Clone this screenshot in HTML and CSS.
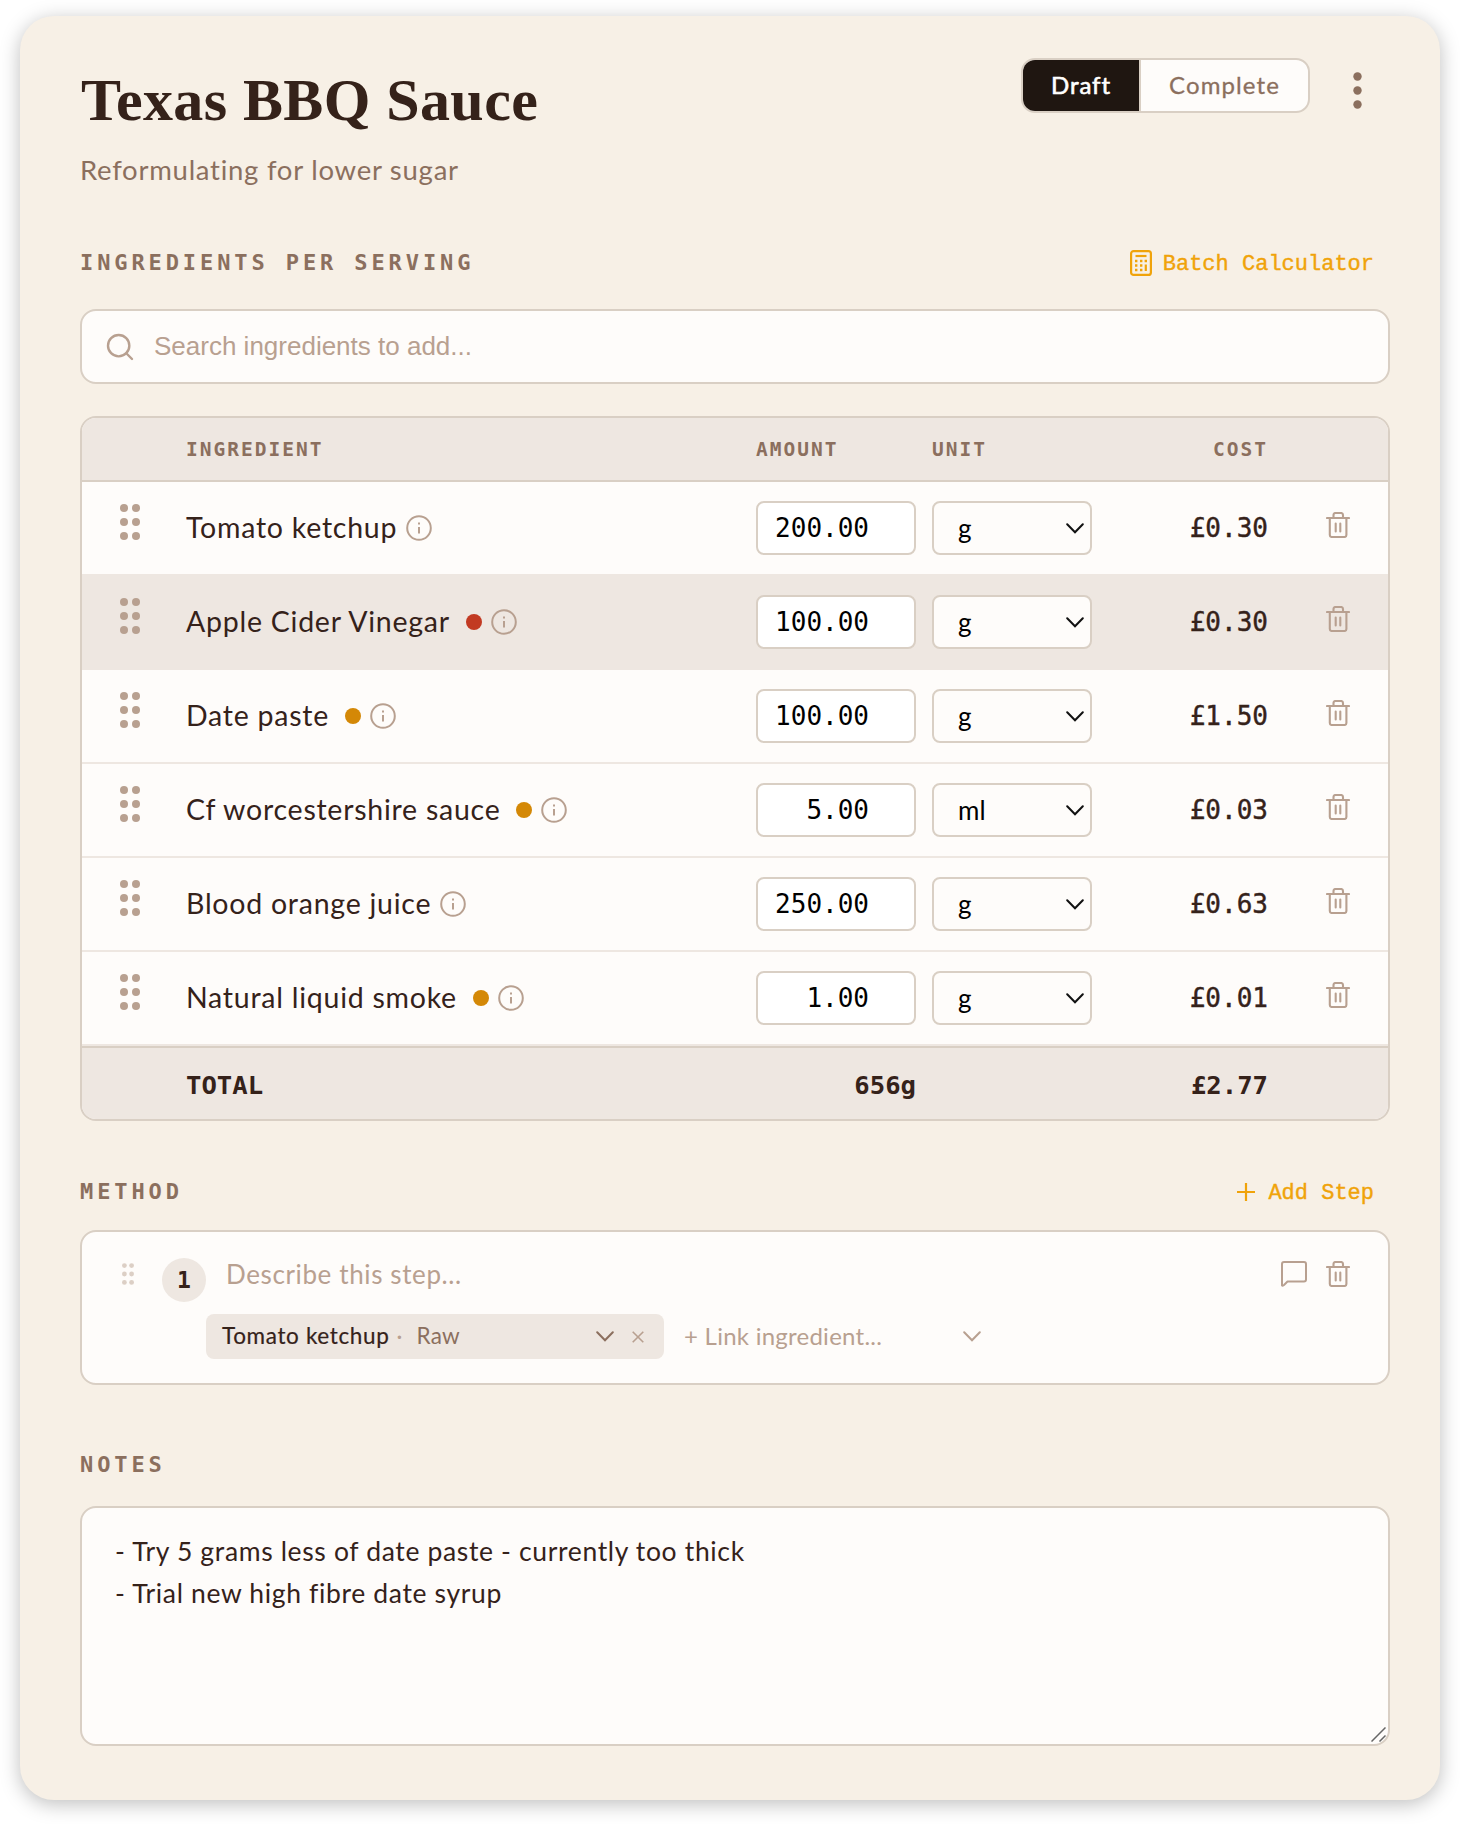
FILE: index.html
```html
<!DOCTYPE html>
<html lang="en">
<head>
    <meta charset="UTF-8">
    <meta name="viewport" content="width=device-width, initial-scale=1.0">
    <title>Texas BBQ Sauce</title>
    <link rel="stylesheet" href="styles.css">
</head>
<body>
    <!-- shared icons -->
    <svg class="sprite" aria-hidden="true">
        <symbol id="i-grip" viewBox="0 0 20 36">
            <circle cx="4" cy="4" r="4"/><circle cx="16" cy="4" r="4"/>
            <circle cx="4" cy="18" r="4"/><circle cx="16" cy="18" r="4"/>
            <circle cx="4" cy="32" r="4"/><circle cx="16" cy="32" r="4"/>
        </symbol>
        <symbol id="i-info" viewBox="0 0 26 26">
            <circle cx="13" cy="13" r="11.8" fill="none" stroke="currentColor" stroke-width="2"/>
            <path d="M13 12v6.5M13 7.6v2" fill="none" stroke="currentColor" stroke-width="2"/>
        </symbol>
        <symbol id="i-trash" viewBox="0 0 24 26">
            <path d="M1 6h22M3.8 6v17a2 2 0 0 0 2 2h12.6a2 2 0 0 0 2-2V6M7.5 6V3a2 2 0 0 1 2-2H15a2 2 0 0 1 2 2v3M9.700 11.500v8M14.300 11.500v8" fill="none" stroke="currentColor" stroke-width="2.1" stroke-linecap="round"/>
        </symbol>
        <symbol id="i-chevron" viewBox="0 0 18 11">
            <path d="M1.2 1.2 9 9.2l7.800-8" fill="none" stroke="currentColor" stroke-width="2" stroke-linecap="round"/>
        </symbol>
    </svg>

    <main class="card">
        <header class="card-header">
            <div>
                <h1>Texas BBQ Sauce</h1>
                <p class="subtitle">Reformulating for lower sugar</p>
            </div>
            <div class="header-actions">
                <div class="toggle">
                    <button class="toggle-btn active">Draft</button>
                    <button class="toggle-btn">Complete</button>
                </div>
                <button class="more-btn" aria-label="More">
                    <svg width="9" height="37" viewBox="0 0 9 37" fill="currentColor">
                        <circle cx="4.5" cy="4.5" r="4.2"/><circle cx="4.5" cy="18.5" r="4.2"/><circle cx="4.5" cy="32.5" r="4.2"/>
                    </svg>
                </button>
            </div>
        </header>

        <section class="ingredients">
            <div class="section-head">
                <h2>INGREDIENTS PER SERVING</h2>
                <button class="link-btn">
                    <svg width="22" height="26" viewBox="0 0 22 26" fill="none" stroke="currentColor" stroke-width="2.2">
                        <rect x="1.1" y="1.1" width="19.8" height="23.8" rx="2.5"/>
                        <path d="M5.500 6h11"/>
                        <path d="M5 11h2.400M10 11h2.400M14.600 11H17M5 15.500h2.400M10 15.500h2.400M5 20h2.400M10 20h2.400" stroke-width="2.4"/>
                        <path d="M15.800 14.500v6.500"/>
                    </svg>
                    <span>Batch Calculator</span>
                </button>
            </div>

            <label class="search">
                <svg width="32" height="32" viewBox="0 0 24 24" fill="none" stroke="currentColor" stroke-width="1.8" stroke-linecap="round">
                    <circle cx="11" cy="11" r="8"/><path d="m21 21-4.3-4.3"/>
                </svg>
                <input type="text" placeholder="Search ingredients to add...">
            </label>

            <div class="table">
                <div class="row table-head">
                    <span></span><span>INGREDIENT</span><span>AMOUNT</span><span>UNIT</span><span class="cost">COST</span><span></span>
                </div>
                <div class="row item">
                    <svg class="grip"><use href="#i-grip"/></svg>
                    <div class="name"><span>Tomato ketchup</span><svg class="info"><use href="#i-info"/></svg></div>
                    <input class="amount" type="text" value="200.00">
                    <div class="unit"><select><option>g</option></select><svg class="chevron"><use href="#i-chevron"/></svg></div>
                    <span class="cost">£0.30</span>
                    <svg class="trash"><use href="#i-trash"/></svg>
                </div>
                <div class="row item highlighted">
                    <svg class="grip"><use href="#i-grip"/></svg>
                    <div class="name"><span>Apple Cider Vinegar</span><i class="dot red"></i><svg class="info"><use href="#i-info"/></svg></div>
                    <input class="amount" type="text" value="100.00">
                    <div class="unit"><select><option>g</option></select><svg class="chevron"><use href="#i-chevron"/></svg></div>
                    <span class="cost">£0.30</span>
                    <svg class="trash"><use href="#i-trash"/></svg>
                </div>
                <div class="row item">
                    <svg class="grip"><use href="#i-grip"/></svg>
                    <div class="name"><span>Date paste</span><i class="dot"></i><svg class="info"><use href="#i-info"/></svg></div>
                    <input class="amount" type="text" value="100.00">
                    <div class="unit"><select><option>g</option></select><svg class="chevron"><use href="#i-chevron"/></svg></div>
                    <span class="cost">£1.50</span>
                    <svg class="trash"><use href="#i-trash"/></svg>
                </div>
                <div class="row item">
                    <svg class="grip"><use href="#i-grip"/></svg>
                    <div class="name"><span>Cf worcestershire sauce</span><i class="dot"></i><svg class="info"><use href="#i-info"/></svg></div>
                    <input class="amount" type="text" value="5.00">
                    <div class="unit"><select><option>ml</option></select><svg class="chevron"><use href="#i-chevron"/></svg></div>
                    <span class="cost">£0.03</span>
                    <svg class="trash"><use href="#i-trash"/></svg>
                </div>
                <div class="row item">
                    <svg class="grip"><use href="#i-grip"/></svg>
                    <div class="name"><span>Blood orange juice</span><svg class="info"><use href="#i-info"/></svg></div>
                    <input class="amount" type="text" value="250.00">
                    <div class="unit"><select><option>g</option></select><svg class="chevron"><use href="#i-chevron"/></svg></div>
                    <span class="cost">£0.63</span>
                    <svg class="trash"><use href="#i-trash"/></svg>
                </div>
                <div class="row item">
                    <svg class="grip"><use href="#i-grip"/></svg>
                    <div class="name"><span>Natural liquid smoke</span><i class="dot"></i><svg class="info"><use href="#i-info"/></svg></div>
                    <input class="amount" type="text" value="1.00">
                    <div class="unit"><select><option>g</option></select><svg class="chevron"><use href="#i-chevron"/></svg></div>
                    <span class="cost">£0.01</span>
                    <svg class="trash"><use href="#i-trash"/></svg>
                </div>
                <div class="row table-total">
                    <span></span><span>TOTAL</span><span class="total-amount">656g</span><span></span><span class="cost">£2.77</span><span></span>
                </div>
            </div>
        </section>

        <section class="method">
            <div class="section-head">
                <h2>METHOD</h2>
                <button class="link-btn add-step">
                    <svg width="18" height="18" viewBox="0 0 18 18" fill="none" stroke="currentColor" stroke-width="2.2"><path d="M9 0v18M0 9h18"/></svg>
                    <span>Add Step</span>
                </button>
            </div>
            <div class="step">
                <div class="step-main">
                    <svg class="grip-small"><use href="#i-grip"/></svg>
                    <span class="step-number">1</span>
                    <span class="step-text">Describe this step...</span>
                    <div class="step-actions">
                        <svg width="26" height="26" viewBox="0 0 26 26" fill="none" stroke="currentColor" stroke-width="2" stroke-linejoin="round"><path d="M1 24.500V3a2 2 0 0 1 2-2h20a2 2 0 0 1 2 2v15.500a2 2 0 0 1-2 2H6.500L3 24Q1.500 25.200 1 24.500Z"/></svg>
                        <svg class="trash"><use href="#i-trash"/></svg>
                    </div>
                </div>
                <div class="step-links">
                    <div class="chip">
                        <span class="chip-name">Tomato ketchup</span>
                        <span class="chip-sep">·</span>
                        <span class="chip-state">Raw</span>
                        <svg class="chevron"><use href="#i-chevron"/></svg>
                        <svg class="remove" viewBox="0 0 12 12" fill="none" stroke="currentColor" stroke-width="1.6"><path d="m.7.7 10.600 10.600M11.300.7.7 11.300"/></svg>
                    </div>
                    <div class="link-select">
                        <span>+ Link ingredient...</span>
                        <svg class="chevron"><use href="#i-chevron"/></svg>
                    </div>
                </div>
            </div>
        </section>

        <section class="notes">
            <h2>NOTES</h2>
            <div class="notes-box">
                <textarea>- Try 5 grams less of date paste - currently too thick
- Trial new high fibre date syrup</textarea>
                <svg class="resizer" viewBox="0 0 15 15" fill="none" stroke="#666" stroke-width="1.5"><path d="M.5 14.500 14.500.5M8.500 14.500l6-6"/></svg>
            </div>
        </section>
    </main>
</body>
</html>
```
FILE: styles.css
```css
:root {
    --bg: #f7f0e6;
    --surface: #fefcfa;
    --shade: #eee7e1;
    --border: #d9cfc4;
    --text: #35221a;
    --muted: #8b6f5e;
    --light: #b8a090;
    --amber: #f0a30a;
    --sans: Lato, 'Open Sans', sans-serif;
    --mono: 'DejaVu Sans Mono', monospace;
}

* {
    box-sizing: border-box;
}

body {
    margin: 0;
    padding: 16px 20px 24px;
    background: #fff;
    color: var(--text);
    font-family: var(--sans);
}

h1, h2, p {
    margin: 0;
}

button {
    padding: 0;
    border: none;
    background: none;
    font: inherit;
    color: inherit;
}

svg {
    display: block;
    flex: none;
}

.sprite {
    display: none;
}

.card {
    height: 1784px;
    padding: 42px 50px 0 60px;
    background: var(--bg);
    border-radius: 34px;
    box-shadow: 0 4px 20px rgba(0, 0, 0, 0.26);
}

/* header */
.card-header {
    display: flex;
    justify-content: space-between;
    height: 180px;
}

h1 {
    padding: 8px 0 0 1px;
    font: bold 60px/68px 'Liberation Serif', serif;
    letter-spacing: 0.4px;
}

.subtitle {
    margin-top: 19px;
    font-size: 27.5px;
    line-height: 34px;
    letter-spacing: 0.74px;
    color: var(--muted);
}

.header-actions {
    display: flex;
    align-items: flex-start;
    margin-right: 28px;
}

.toggle {
    display: flex;
    width: 289px;
    height: 55px;
    border: 2px solid var(--border);
    border-radius: 14px;
    background: var(--surface);
    overflow: hidden;
}

.toggle-btn {
    flex: 1;
    padding-bottom: 3px;
    font-size: 24px;
    letter-spacing: 1.1px;
    color: var(--muted);
    -webkit-text-stroke: 0.3px;
}

.toggle-btn.active {
    flex: 0 0 118px;
    background: #1f1611;
    color: #fff;
    border-right: 2px solid var(--border);
    letter-spacing: 0.9px;
    -webkit-text-stroke: 0.6px;
}

.more-btn {
    margin: 14px 0 0 43px;
    color: var(--muted);
}

/* section titles */
.section-head {
    display: flex;
    align-items: center;
    justify-content: space-between;
    height: 50px;
    padding-right: 16px;
}

h2 {
    font: bold 22px/50px var(--mono);
    letter-spacing: 3.9px;
    color: var(--muted);
}

.link-btn {
    display: flex;
    align-items: center;
    gap: 11px;
    font: 22px/30px 'Liberation Mono', monospace;
    color: var(--amber);
    -webkit-text-stroke: 0.4px;
}

.link-btn span {
    padding-top: 3px;
}

.add-step {
    gap: 13px;
}

/* search */
.search {
    display: flex;
    align-items: center;
    gap: 18px;
    height: 75px;
    margin-top: 21px;
    padding: 0 22px;
    border: 2px solid var(--border);
    border-radius: 16px;
    background: var(--surface);
    color: var(--light);
}

.search input {
    flex: 1;
    padding: 0;
    border: none;
    background: none;
    font: 26px 'Liberation Sans', sans-serif;
}

.search input::placeholder {
    color: var(--light);
}

/* ingredients table */
.table {
    margin-top: 32px;
    border: 2px solid var(--border);
    border-radius: 16px;
    background: var(--surface);
    overflow: hidden;
}

.row {
    display: grid;
    grid-template-columns: 50px 554px 160px 160px 160px 24px;
    column-gap: 16px;
    align-items: center;
    padding-left: 38px;
}

.table-head {
    height: 64px;
    background: var(--shade);
    border-bottom: 2px solid var(--border);
    font: bold 19.5px var(--mono);
    letter-spacing: 2px;
    color: var(--muted);
}

.item {
    height: 94px;
    border-bottom: 2px solid var(--shade);
}

.highlighted {
    background: var(--shade);
}

.grip {
    width: 20px;
    height: 36px;
    margin-bottom: 12px;
    fill: var(--light);
}

.name {
    display: flex;
    align-items: center;
    font-size: 28.5px;
    letter-spacing: 0.75px;
}

.name span {
    padding-bottom: 2px;
}

.dot {
    width: 16px;
    height: 16px;
    margin-left: 16px;
    border-radius: 50%;
    background: #d48806;
}

.dot.red {
    background: #c23a22;
}

.info {
    width: 26px;
    height: 26px;
    margin-left: 9px;
    color: var(--light);
}

.amount {
    width: 160px;
    height: 54px;
    padding: 0 45px 0 0;
    border: 2px solid var(--border);
    border-radius: 8px;
    background: #fff;
    font: 26px var(--mono);
    text-align: right;
    color: #000;
}

.unit {
    display: flex;
    align-items: center;
    height: 54px;
    border: 2px solid var(--border);
    border-radius: 8px;
    background: var(--surface);
    padding: 0 6px 0 24px;
    color: #111;
}

.unit select {
    flex: 1;
    appearance: none;
    padding: 0;
    border: none;
    background: none;
    font: 26px var(--sans);
    color: #000;
}

.chevron {
    width: 18px;
    height: 11px;
}

.cost {
    text-align: right;
}

.item .cost {
    font: 26px var(--mono);
    -webkit-text-stroke: 0.4px;
}

.trash {
    width: 24px;
    height: 26px;
    color: var(--light);
}

.item .trash {
    margin: 0 0 6px 42px;
}

.table-total {
    height: 73px;
    padding-top: 2px;
    border-top: 2px solid var(--border);
    background: var(--shade);
    font: bold 25.6px var(--mono);
}

.total-amount {
    text-align: right;
}

/* method */
.method {
    margin-top: 46px;
}

.step {
    height: 155px;
    margin-top: 13px;
    border: 2px solid var(--border);
    border-radius: 16px;
    background: var(--surface);
}

.step-main {
    display: flex;
    padding: 26px 38px 0 40px;
}

.grip-small {
    width: 12px;
    height: 22px;
    margin-top: 5px;
    fill: #dccfc5;
}

.step-number {
    width: 44px;
    height: 44px;
    margin-left: 28px;
    border-radius: 50%;
    background: var(--shade);
    font: bold 23px/45px var(--mono);
    text-align: center;
}

.step-text {
    margin-left: 20px;
    font-size: 26px;
    line-height: 32px;
    letter-spacing: 0.62px;
    color: var(--light);
}

.step-actions {
    display: flex;
    gap: 19px;
    margin: 3px 0 0 auto;
    color: var(--light);
}

.step-links {
    display: flex;
    align-items: center;
    margin: 12px 0 0 124px;
}

.chip {
    display: flex;
    align-items: center;
    width: 458px;
    height: 45px;
    padding: 0 20px 0 16px;
    border-radius: 8px;
    background: var(--shade);
    font-size: 22.5px;
    letter-spacing: 0.2px;
    color: var(--muted);
}

.chip span, .link-select span {
    padding-bottom: 2px;
}

.chip-name {
    color: var(--text);
    letter-spacing: 0.65px;
    -webkit-text-stroke: 0.2px;
}

.chip-sep {
    margin: 0 14px 0 7px;
    color: var(--light);
}

.chip .chevron {
    margin-left: auto;
}

.remove {
    width: 12px;
    height: 12px;
    margin-left: 18px;
    color: var(--light);
}

.link-select {
    display: flex;
    align-items: center;
    justify-content: space-between;
    width: 297px;
    margin-left: 20px;
    font-size: 24px;
    letter-spacing: 0.25px;
    color: var(--light);
}

/* notes */
.notes {
    margin-top: 55px;
}

.notes-box {
    position: relative;
    height: 240px;
    margin-top: 16px;
    border: 2px solid var(--border);
    border-radius: 16px;
    background: var(--surface);
    overflow: hidden;
}

.notes-box textarea {
    display: block;
    width: 100%;
    height: 100%;
    padding: 22px 33px;
    border: none;
    background: none;
    resize: none;
    font: 26.5px/42px var(--sans);
    letter-spacing: 0.65px;
    color: var(--text);
}

.resizer {
    position: absolute;
    right: 2px;
    bottom: 2px;
    width: 15px;
    height: 15px;
}
```
